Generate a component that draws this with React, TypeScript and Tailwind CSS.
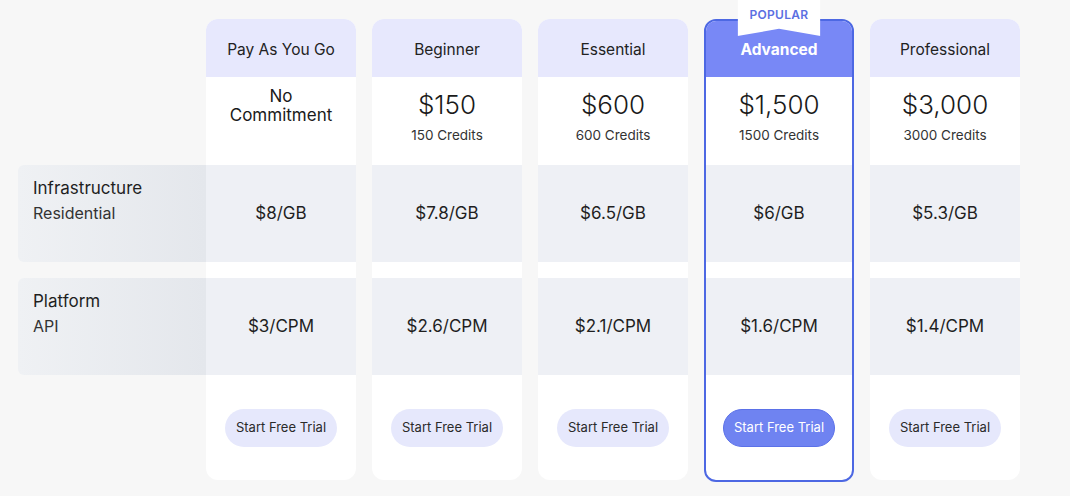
import React from "react";

type Plan = {
    name: string;
    price?: string;
    credits?: string;
    gb: string;
    cpm: string;
    popular?: boolean;
};

const plans: Plan[] = [
    { name: "Pay As You Go", gb: "$8/GB", cpm: "$3/CPM" },
    { name: "Beginner", price: "$150", credits: "150 Credits", gb: "$7.8/GB", cpm: "$2.6/CPM" },
    { name: "Essential", price: "$600", credits: "600 Credits", gb: "$6.5/GB", cpm: "$2.1/CPM" },
    { name: "Advanced", price: "$1,500", credits: "1500 Credits", gb: "$6/GB", cpm: "$1.6/CPM", popular: true },
    { name: "Professional", price: "$3,000", credits: "3000 Credits", gb: "$5.3/GB", cpm: "$1.4/CPM" },
];

const PlanCard = ({ plan }: { plan: Plan }) => {
    const hot = plan.popular;
    return (
        <div
            className={
                hot
                    ? "relative flex flex-col w-[150px] h-[463px] rounded-[12px] bg-white border-2 border-[#4d68e3]"
                    : "relative flex flex-col w-[150px] h-[461px] rounded-[12px] bg-white"
            }
        >
            {/* popular ribbon */}
            {hot && (
                <div className="absolute -top-[21px] left-1/2 -translate-x-1/2 w-[83px] h-[36px] bg-white [clip-path:polygon(0_0,100%_0,100%_100%,50%_80%,0_100%)] flex justify-center pt-[6px] text-[12px] font-semibold tracking-[0.3px] text-[#5b6fe2]">
                    POPULAR
                </div>
            )}

            <div
                className={
                    hot
                        ? "h-[56px] flex items-center justify-center pt-[2px] text-[15.5px] bg-[#7888f6] text-white font-bold rounded-t-[10px]"
                        : "h-[58px] flex items-center justify-center pt-[3px] text-[15.5px] bg-[#e7e8fd] text-[#222] rounded-t-[12px]"
                }
            >
                {plan.name}
            </div>

            <div className="h-[88px] flex flex-col items-center pt-[12px] text-[#1a1a1a]">
                {plan.price ? (
                    <>
                        <div className="text-[26px] font-light leading-[32px]">{plan.price}</div>
                        <div className="text-[13.5px] leading-[20px] mt-[4px] text-[#333]">{plan.credits}</div>
                    </>
                ) : (
                    <div className="text-[17px] leading-[19px] text-center -mt-[2px]">
                        No
                        <br />
                        Commitment
                    </div>
                )}
            </div>

            <div className="h-[97px] bg-[#eef0f5] flex items-center justify-center text-[17px] text-[#1f1f1f]">
                {plan.gb}
            </div>
            <div className="h-[16px]" />
            <div className="h-[97px] bg-[#eef0f5] flex items-center justify-center text-[17px] text-[#1f1f1f]">
                {plan.cpm}
            </div>

            <div className="flex-1 flex items-center justify-center">
                <button
                    className={
                        hot
                            ? "h-[38px] px-[10px] rounded-full text-[13px] bg-[#6f83f1] text-white border border-[#5b71e8]"
                            : "h-[38px] px-[11px] rounded-full text-[13px] bg-[#e6e8fc] text-[#2a2a2a]"
                    }
                >
                    Start Free Trial
                </button>
            </div>
        </div>
    );
};

export default function App() {
    return (
        <div
            className="w-full h-[496px] bg-[#f7f7f7] overflow-hidden flex pt-[19px] pl-[18px]"
            style={{ fontFamily: "Inter, 'Noto Sans', sans-serif" }}
        >
            {/* Row labels */}
            <div className="w-[188px] flex flex-col gap-[16px] pt-[146px]">
                <div className="h-[97px] rounded-l-[6px] bg-gradient-to-r from-[#eff1f4] to-[#e4e7ec] px-[15px] pt-[11px]">
                    <div className="text-[17px] leading-[24px] text-[#1f1f1f]">Infrastructure</div>
                    <div className="text-[16px] leading-[26px] text-[#333]">Residential</div>
                </div>
                <div className="h-[97px] rounded-l-[6px] bg-gradient-to-r from-[#eff1f4] to-[#e4e7ec] px-[15px] pt-[11px]">
                    <div className="text-[17px] leading-[24px] text-[#1f1f1f]">Platform</div>
                    <div className="text-[16px] leading-[26px] text-[#333]">API</div>
                </div>
            </div>

            {/* Plans */}
            <div className="flex gap-[16px] items-start">
                {plans.map((p) => (
                    <PlanCard key={p.name} plan={p} />
                ))}
            </div>
        </div>
    );
}
